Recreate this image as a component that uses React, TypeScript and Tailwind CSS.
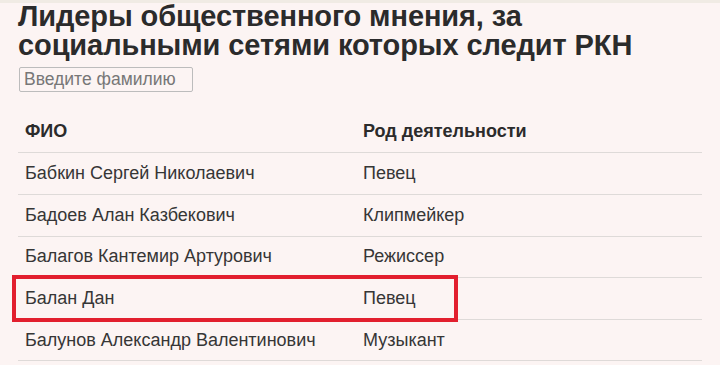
import React from "react";

const rows = [
  { name: "Бабкин Сергей Николаевич", job: "Певец" },
  { name: "Бадоев Алан Казбекович", job: "Клипмейкер" },
  { name: "Балагов Кантемир Артурович", job: "Режиссер" },
  { name: "Балан Дан", job: "Певец", marked: true },
  { name: "Балунов Александр Валентинович", job: "Музыкант" },
];

export default function App() {
  return (
    <div
      className="relative w-[720px] h-[365px] overflow-hidden bg-[#fcf4f3] text-[#2b2b2b]"
      style={{ fontFamily: '"Liberation Sans Narrow", "Liberation Sans", Arial, sans-serif' }}
    >
      <div className="absolute top-0 left-0 right-0 h-[3px] bg-[#f0ebe4]" />
      <div className="pl-[18px] pr-[18px]">
        <h1 className="text-[29px] leading-[29px] font-bold tracking-[-0.1px] pt-[2px]">
          Лидеры общественного мнения, за
          <br />
          социальными сетями которых следит РКН
        </h1>
        <input
          type="text"
          placeholder="Введите фамилию"
          className="mt-[7px] ml-[1px] w-[174px] h-[25px] border border-[#bcbcbc] rounded-[2px] bg-transparent px-[4px] text-[17.5px] placeholder:text-[#777]"
        />
        <div className="mt-[19px]">
          <div className="flex h-[42px] items-center border-b border-[#dedad8] font-bold text-[18px]">
            <div className="w-[345px] pl-[7px]">ФИО</div>
            <div>Род деятельности</div>
          </div>
          {rows.map((r) => (
            <div
              key={r.name}
              className="relative flex h-[41.6px] items-center border-b border-[#dedad8] text-[18px] text-[#363636]"
            >
              <div className="w-[345px] pl-[7px]">{r.name}</div>
              <div>{r.job}</div>
              {r.marked && (
                <div className="absolute left-[-6px] top-[-3px] w-[446px] h-[47px] border-[4px] border-[#e21f2e]" />
              )}
            </div>
          ))}
        </div>
      </div>
    </div>
  );
}
